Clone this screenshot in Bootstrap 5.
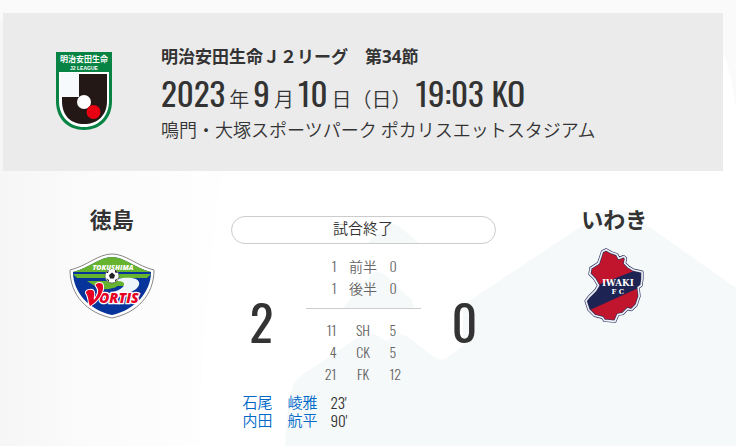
<!DOCTYPE html>
<html lang="ja">
<head>
<meta charset="utf-8">
<meta name="viewport" content="width=device-width, initial-scale=1">
<title>徳島 vs いわき</title>
<link href="https://cdn.jsdelivr.net/npm/bootstrap@5.3.0/dist/css/bootstrap.min.css" rel="stylesheet">
<style>
body{font-family:"Noto Sans","Noto Sans CJK JP",sans-serif;color:#333;background:#fff}
.page{min-height:100vh;isolation:isolate;padding:13px 13px 12px 3px}
.backdrop{inset:0;z-index:-1}
.numerals{font-family:Oswald,"Roboto Condensed","Noto Sans CJK JP",sans-serif}
.match-head{background:#ebebeb;padding:32px 53px 30px;gap:49px}
.league-name{font-size:17px;line-height:24px;font-weight:700}
.kickoff{font-size:20px;line-height:24px;gap:4px}
.kickoff .numerals{font-size:33px;font-weight:400;line-height:48px}
.venue{font-size:18px;line-height:24px}
.thin{font-family:"Noto Sans CJK JP",sans-serif;font-weight:350}
.teams{gap:10px;padding-top:32px}
.team-name{font-size:22px;line-height:32px;font-weight:700}
.crest{height:80px;margin-top:11px}
.middle{width:265px;padding-top:13px}
.status{border:1px solid #ccc;font-size:15px;height:28px;line-height:22px}
.board{margin-top:11px}
.score{font-size:50px;line-height:56px;width:62px}
.stats{font-size:14px;color:#666;width:115px}
.stats td,.stats th{height:22px;line-height:22px;padding:0;text-align:center;font-weight:350}
.stats td:first-child{width:31px;text-align:right}
.stats td:last-child{width:31px;text-align:left}
.stats .first-stat td,.stats .first-stat th{padding-top:10px}
.stats .last-half td,.stats .last-half th{padding-bottom:9px;border-bottom:1px solid #ccc}
.scorers{font-size:15px;line-height:18px;padding-left:12px;margin-top:8px}
.scorers li{gap:13px}
.scorers a{color:#0069c8}
.scorers .numerals{font-weight:300}
</style>
<script src="https://cdn.jsdelivr.net/npm/bootstrap@5.3.0/dist/js/bootstrap.bundle.min.js"></script>
</head>
<body>
<main class="page position-relative overflow-hidden">
  <svg class="backdrop position-absolute w-100 h-100" viewBox="0 0 736 446" preserveAspectRatio="xMinYMin slice" aria-hidden="true">
    <defs><linearGradient id="shade" x1="0" y1="0" x2="1" y2="0"><stop offset="0" stop-color="#f6f6f6"/><stop offset=".35" stop-color="#fbfbfb"/><stop offset=".8" stop-color="#fefefe"/><stop offset="1" stop-color="#fff"/></linearGradient></defs>
    <path d="M0 0H260Q200 230 200 446H0z" fill="url(#shade)"/>
    <path d="M0 0H736V110Q728 40 700 20H0z" fill="#fafafa"/>
    <path d="M285 446Q287 400 294 384Q297 378 305 373L360 336Q370 330 378 336L386 341L394 336Q400 332 408 337L434 357Q441 362 448 357L463 346V305L600 214Q617 204 634 216L736 288V446z" fill="#f6f9fa"/>
    <path d="M366 244L386 226Q393 221 400 227L420 244zM342 309L372 274Q378 269 385 275L412 300L414 309z" fill="#f6f9fa"/>
  </svg>

  <header class="match-head d-flex align-items-center">
    <svg width="56" height="79" viewBox="0 0 56 79" class="flex-shrink-0 mb-1" role="img" aria-label="J2 LEAGUE">
      <path d="M0 0H56V49C56 67 44 78 28 78S0 67 0 49z" fill="#078344"/>
      <path d="M3 20H53V49C53 65 42 75 28 75S3 65 3 49z" fill="#fff"/>
      <path d="M6 22H51V49C51 64 41 72 28 72S6 64 6 49z" fill="#231815"/>
      <path d="M4 21H23V45H4z" fill="#f6fafd"/>
      <circle cx="28" cy="50" r="7" fill="#fff"/><circle cx="37.500" cy="60" r="7" fill="#e60012"/>
      <text x="28" y="10" text-anchor="middle" font-family="Noto Sans CJK JP" font-weight="700" font-size="8" fill="#fff">明治安田生命</text>
      <text x="28" y="18" text-anchor="middle" font-family="Liberation Sans" font-weight="700" font-size="5" fill="#fff">J2 LEAGUE</text>
    </svg>
    <div>
      <h1 class="league-name mb-0">明治安田生命Ｊ２リーグ　第34節</h1>
      <p class="kickoff d-flex align-items-baseline mb-0 text-nowrap"><span class="numerals">2023</span> <span class="thin">年</span> <span class="numerals">9</span> <span class="thin">月</span> <span class="numerals">10</span> <span class="thin">日（日）</span> <span class="numerals">19:03 KO</span></p>
      <p class="venue thin mb-0">鳴門・大塚スポーツパーク ポカリスエットスタジアム</p>
    </div>
  </header>

  <section class="teams d-flex">
    <div class="flex-fill w-25 text-center">
      <h2 class="team-name mb-0">徳島</h2>
      <div class="crest d-flex align-items-center justify-content-center">
        <svg width="86" height="66" viewBox="0 0 86 66" role="img" aria-label="TOKUSHIMA VORTIS">
          <defs><clipPath id="shield"><path d="M43 4C55 4 66 15 82 19C82 39 66 57 43 62C20 57 4 39 4 19C20 15 31 4 43 4z"/></clipPath></defs>
          <path d="M43 1C57 1 68 13 85 17C85 42 68 60 43 65C18 60 1 42 1 17C18 13 29 1 43 1z" fill="#fff" stroke="#888" stroke-width="1"/>
          <g clip-path="url(#shield)">
            <path d="M0 0H86V66H0z" fill="#07349b"/>
            <path d="M0 0H86V19H0zM4 21H82L78 25H8zM18 28H66L60 33H26z" fill="#65b32e"/>
          </g>
          <path d="M48 26C61 23 72 25 70 32C68 38 58 41 48 41H35Q53 38 55 32Q56 28 48 28z" fill="#eef6fb"/>
          <path d="M28 31Q40 28 47 31Q50 34 44 35Q34 38 28 34z" fill="#65b32e"/>
          <circle cx="43" cy="23" r="7" fill="#fff" stroke="#555" stroke-width=".7"/>
          <path d="M43 19.500L46 22L45 25.500H41L40 22zM37 20L40 17L39 20zM46 16.500L49 20L46 19.500zM37 25L40 27L40 29zM49 25L46 27L46 29z" fill="#222"/>
          <g font-family="Open Sans" font-weight="800" font-style="italic">
            <text x="44" y="16.500" text-anchor="middle" font-size="7" fill="#fff">TOKUSHIMA</text>
            <text x="30" y="50" font-size="14" fill="#e60023" stroke="#fff" stroke-width="2.500" paint-order="stroke">ORTIS</text>
          </g>
          <path d="M17 40C16 37 24 35 25 39C26 42 24 45 25 47C29 42 31 37 27 33C25 30 34 28 34 33C35 40 28 49 21 53C19 49 20 44 17 40z" fill="#e60023" stroke="#fff" stroke-width="2" paint-order="stroke"/>
        </svg>
      </div>
    </div>

    <div class="middle flex-shrink-0">
      <div class="status thin rounded-pill text-center">試合終了</div>
      <div class="board d-flex align-items-center justify-content-between">
        <div class="score numerals text-center">2</div>
        <table class="stats">
          <tbody>
            <tr><td class="numerals">1</td><th scope="row" class="thin">前半</th><td class="numerals">0</td></tr>
            <tr class="last-half"><td class="numerals">1</td><th scope="row" class="thin">後半</th><td class="numerals">0</td></tr>
            <tr class="first-stat"><td class="numerals">11</td><th scope="row" class="numerals">SH</th><td class="numerals">5</td></tr>
            <tr><td class="numerals">4</td><th scope="row" class="numerals">CK</th><td class="numerals">5</td></tr>
            <tr><td class="numerals">21</td><th scope="row" class="numerals">FK</th><td class="numerals">12</td></tr>
          </tbody>
        </table>
        <div class="score numerals text-center">0</div>
      </div>
      <ul class="scorers list-unstyled mb-0">
        <li class="d-flex"><a href="#" class="thin text-decoration-none">石尾　崚雅</a><span class="numerals">23'</span></li>
        <li class="d-flex"><a href="#" class="thin text-decoration-none">内田　航平</a><span class="numerals">90'</span></li>
      </ul>
    </div>

    <div class="flex-fill w-25 text-center">
      <h2 class="team-name mb-0">いわき</h2>
      <div class="crest d-flex align-items-center justify-content-center">
        <svg width="62" height="78" viewBox="-1 -1 64 79" role="img" aria-label="IWAKI FC">
          <defs><clipPath id="land"><path id="outline" d="M19 3L23 1L28 4L34 6L36 10L41 8L43 10L42 15L46 19L51 22L60 24V31L59 38L56 40L57 49L54 58L49 63L45 62L40 67L35 68L32 75L21 74L19 71L11 69L5 63L2 54L5 50L12 43L15 38L11 31L6 26L7 20L15 15z"/></clipPath></defs>
          <g clip-path="url(#land)"><path d="M0 0H62V78H0z" fill="#c1152d"/><path d="M0 43L62 19V38L0 66z" fill="#1d2352"/></g>
          <g fill="none" stroke-linejoin="round"><use href="#outline" stroke="#2a315f" stroke-width="3"/><use href="#outline" stroke="#eef0f6" stroke-width="1.700"/></g>
          <g font-family="DejaVu Serif" font-weight="700" fill="#fff" text-anchor="middle">
            <text x="35" y="38" font-size="9">IWAKI</text><text x="35" y="47" font-size="7">F C</text>
          </g>
        </svg>
      </div>
    </div>
  </section>
</main>
</body>
</html>
